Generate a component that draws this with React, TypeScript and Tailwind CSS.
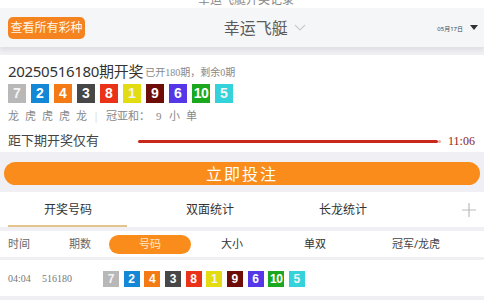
import React from "react";

const COLORS: Record<number, string> = {
  1: "#e3dc12",
  2: "#1487d6",
  3: "#474747",
  4: "#f47a16",
  5: "#34d3dc",
  6: "#5537e8",
  7: "#b8b8b8",
  8: "#ea3218",
  9: "#6e0d08",
  10: "#1ba81e",
};

const nums = [7, 2, 4, 3, 8, 1, 9, 6, 10, 5];

const sans = { fontFamily: '"Noto Sans", "Noto Sans CJK SC", sans-serif' };
const serif = { fontFamily: '"Liberation Serif", "Noto Sans CJK SC", serif' };

function Ball({ n, size }: { n: number; size: "lg" | "sm" }) {
  const light = n === 1 || n === 7 || n === 5;
  return (
    <div
      className={
        size === "lg"
          ? "w-[18px] h-[19px] flex items-center justify-center text-[14px] font-bold"
          : "w-[16px] h-[16px] flex items-center justify-center text-[12px] font-bold"
      }
      style={{
        background: COLORS[n],
        color: light ? "#f4f4f4" : "#ffffff",
        fontFamily: '"Liberation Sans", Arial, sans-serif',
        letterSpacing: n === 10 ? "-0.5px" : undefined,
      }}
    >
      {n}
    </div>
  );
}

export default function App() {
  return (
    <div className="w-[484px] h-[300px] overflow-hidden bg-[#f0f0f4] relative" style={sans}>
      {/* top cut strip */}
      <div className="h-[8px] bg-white overflow-hidden flex justify-center">
        <div className="text-[12px] text-[#888] mt-[-9px] ml-[8px]">幸运飞艇开奖记录</div>
      </div>
      {/* header */}
      <div className="h-[39px] bg-[#f5f6f8] flex items-center pl-[8px] pr-[6px] shadow-[0_3px_5px_rgba(0,0,0,0.08)] relative z-10">
        <div className="w-[77px] h-[22px] rounded-[5px] bg-[#f58420] text-[#fff5ea] text-[12px] flex items-center justify-center">
          查看所有彩种
        </div>
        <div className="flex-1 flex items-center justify-center pl-[8px]">
          <span className="text-[16px] text-[#5a5a5a]">幸运飞艇</span>
          <svg width="14" height="10" viewBox="0 0 14 10" className="ml-[5px]">
            <path d="M2 2 L7 7 L12 2" fill="none" stroke="#c8ccd2" strokeWidth="1.2" />
          </svg>
        </div>
        <div className="flex items-center">
          <span className="text-[6px] text-[#444] mt-[3px]">05月17日</span>
          <svg width="8" height="6" viewBox="0 0 8 6" className="ml-[7px]">
            <path d="M0 0 L8 0 L4 5 Z" fill="#333" />
          </svg>
        </div>
      </div>
      {/* result card */}
      <div className="mt-[8px] bg-white h-[97px] px-[8px] pt-[7px]">
        <div className="flex items-end">
          <span className="text-[15px] text-[#333] leading-[18px] tracking-[-0.3px]">20250516180期开奖</span>
          <span className="text-[10px] text-[#888] ml-[2px] leading-[14px]">
            已开<span style={serif}>180</span>期，剩余<span style={serif}>0</span>期
          </span>
        </div>
        <div className="flex gap-[5px] mt-[4px]">
          {nums.map((n) => (
            <Ball key={n} n={n} size="lg" />
          ))}
        </div>
        <div className="flex items-center text-[11px] text-[#888] mt-[5px] h-[16px]">
          {["龙", "虎", "虎", "虎", "龙"].map((c, i) => (
            <span key={i} className="w-[17px]">
              {c}
            </span>
          ))}
          <span className="text-[#ddd] ml-[0px] w-[13px]">|</span>
          <span>冠亚和：</span>
          <span className="ml-[6px] w-[13px]" style={serif}>9</span>
          <span className="w-[17px]">小</span>
          <span>单</span>
        </div>
        <div className="flex items-center mt-[8px] h-[18px]">
          <span className="text-[13px] text-[#444] w-[122px]">距下期开奖仅有</span>
          <div className="flex-1 flex items-center">
            <div className="h-[3px] flex-1 bg-[#c9261c] rounded-full ml-[8px]" />
            <div className="w-[3px] h-[3px] rounded-full bg-[#e9a9a0]" />
          </div>
          <span className="text-[12px] text-[#8a1c1c] ml-[7px] w-[28px]" style={serif}>
            11:06
          </span>
        </div>
      </div>
      {/* bet button */}
      <div className="px-[4px] pt-[10px] pb-[7px]">
        <div className="h-[23px] rounded-full bg-[#f98c1b] flex items-center justify-center text-white text-[16px] tracking-[2px]">
          立即投注
        </div>
      </div>
      {/* tabs */}
      <div className="bg-white h-[35px] flex items-stretch relative">
        <div className="w-[136px] flex flex-col items-center justify-center relative">
          <span className="text-[12px] text-[#333] mt-[1px]">开奖号码</span>
          <div className="absolute bottom-0 left-[8px] w-[119px] h-[2px] bg-[#e3c48d]" />
        </div>
        <div className="w-[148px] flex items-center justify-center">
          <span className="text-[12px] text-[#333]">双面统计</span>
        </div>
        <div className="w-[118px] flex items-center justify-center">
          <span className="text-[12px] text-[#333]">长龙统计</span>
        </div>
        <div className="flex-1 flex items-center justify-end pr-[8px]">
          <svg width="14" height="14" viewBox="0 0 14 14">
            <path d="M7 0 V14 M0 7 H14" stroke="#bbb" strokeWidth="1.2" />
          </svg>
        </div>
      </div>
      {/* table header */}
      <div className="mt-[4px] bg-white h-[26px] flex items-center text-[11px] text-[#555]">
        <span className="w-[62px] pl-[8px] text-[#666]">时间</span>
        <span className="w-[47px] text-[#666] pl-[7px]">期数</span>
        <div className="w-[82px] h-[19px] rounded-full bg-[#f98c1b] text-[#fde6c8] flex items-center justify-center">
          号码
        </div>
        <span className="w-[82px] text-center text-[#333]">大小</span>
        <span className="w-[84px] text-center text-[#333]">单双</span>
        <span className="w-[118px] text-center text-[#444]">冠军/龙虎</span>
      </div>
      {/* data row */}
      <div className="mt-[3px] bg-white h-[36px] flex items-center">
        <span className="w-[42px] pl-[8px] text-[10px] text-[#777]" style={serif}>
          04:04
        </span>
        <span className="w-[53px] text-[10px] text-[#777]" style={serif}>
          516180
        </span>
        <div className="flex gap-[4.67px] ml-[8px] mt-[2px]">
          {nums.map((n) => (
            <Ball key={n} n={n} size="sm" />
          ))}
        </div>
      </div>
    </div>
  );
}
